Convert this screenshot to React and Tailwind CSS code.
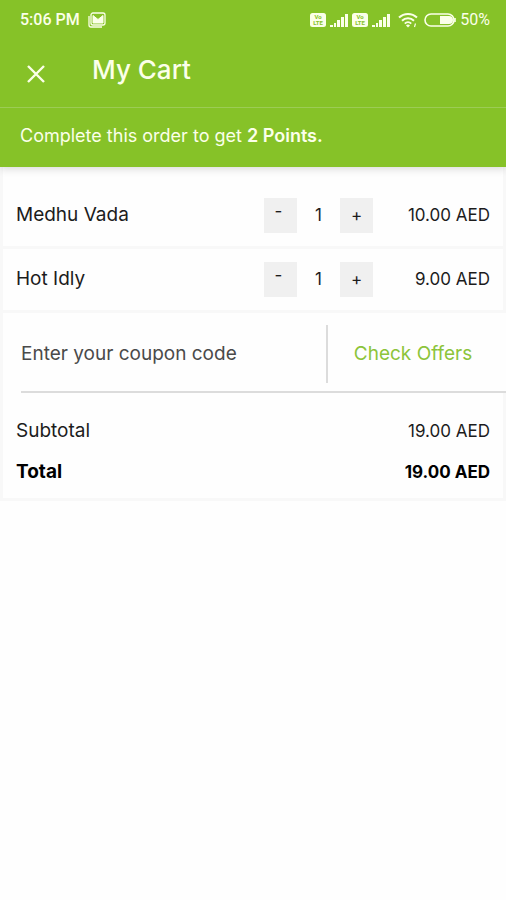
import { useState } from "react";

const initialItems = [
  { id: 1, name: "Medhu Vada", price: 10, qty: 1 },
  { id: 2, name: "Hot Idly", price: 9, qty: 1 },
];

const formatPrice = (value) => `${value.toFixed(2)} AED`;

export default function App() {
  const [items, setItems] = useState(initialItems);
  const [coupon, setCoupon] = useState("");

  const changeQty = (id, step) => {
    setItems(
      items.map((item) =>
        item.id === id ? { ...item, qty: Math.max(0, item.qty + step) } : item
      )
    );
  };

  const total = items.reduce((sum, item) => sum + item.price * item.qty, 0);

  return (
    <div className="min-h-screen bg-[#fefefe] font-['Inter',sans-serif] text-[19px] text-[#1c1c1c]">
      <header className="relative bg-[#86c228] text-[#fbffe9] shadow-[0_2px_8px_rgba(0,0,0,0.15)]">
        <StatusBar />
        <div className="flex h-[68px] items-center gap-11 border-b border-[#9ccc55] px-6 pb-2">
          <button type="button" aria-label="Close">
            <svg className="mt-2 size-6" viewBox="0 0 24 24" fill="none" stroke="currentColor" strokeWidth="2.4">
              <path d="M4 4l16 16M20 4L4 20" />
            </svg>
          </button>
          <h1 className="text-[26px] font-medium">My Cart</h1>
        </div>
        <p className="flex h-[59px] items-center px-5 pb-1 text-lg whitespace-pre">
          Complete this order to get <strong className="font-semibold">2 Points.</strong>
        </p>
      </header>

      <main>
        <ul className="border-x-3 border-[#f8f8f8] pt-[18px]">
          {items.map((item) => (
            <CartItem key={item.id} item={item} onChange={changeQty} />
          ))}
        </ul>

        {/* Coupon */}
        <section className="flex h-20 border-l-3 border-[#f8f8f8] pt-3 pl-[18px]">
          <div className="flex flex-1 border-b-2 border-[#dcdcdc] pb-2">
            <input
              type="text"
              aria-label="Coupon code"
              placeholder="Enter your coupon code"
              value={coupon}
              onChange={(e) => setCoupon(e.target.value)}
              className="min-w-0 flex-1 outline-none placeholder:text-[#4a4a4a]"
            />
            <button
              type="button"
              className="w-[180px] border-l-2 border-[#dcdcdc] pr-2 text-[#8cc43a]"
            >
              Check Offers
            </button>
          </div>
        </section>

        <dl className="border-3 border-t-0 border-[#f8f8f8] px-[13px] pt-6 pb-3 leading-7">
          <div className="flex justify-between pb-[13px]">
            <dt>Subtotal</dt>
            <dd className="text-[17px]">{formatPrice(total)}</dd>
          </div>
          <div className="flex justify-between font-bold text-black">
            <dt>Total</dt>
            <dd className="text-[17px]">{formatPrice(total)}</dd>
          </div>
        </dl>
      </main>
    </div>
  );
}

function CartItem({ item, onChange }) {
  return (
    <li className="flex h-16 items-center border-b-3 border-[#f8f8f8] px-[13px]">
      <span className="flex-1">{item.name}</span>
      <div className="flex h-[35px] items-center text-[17px]">
        <button
          type="button"
          aria-label={`Remove one ${item.name}`}
          onClick={() => onChange(item.id, -1)}
          className="h-full w-[33px] bg-[#f0f0f0] pr-1 pb-2"
        >
          -
        </button>
        <span className="w-[43px] text-center">{item.qty}</span>
        <button
          type="button"
          aria-label={`Add one ${item.name}`}
          onClick={() => onChange(item.id, 1)}
          className="h-full w-[33px] bg-[#f0f0f0]"
        >
          +
        </button>
      </div>
      <span className="w-[117px] text-right text-[17px]">{formatPrice(item.price)}</span>
    </li>
  );
}

function StatusBar() {
  return (
    <div className="flex h-10 items-center justify-between pr-4 pl-5 font-['Roboto',sans-serif] text-base">
      <div className="flex items-center gap-2">
        <span className="font-medium">5:06 PM</span>
        <MailIcon />
      </div>
      <div className="flex items-center gap-1">
        <VolteIcon />
        <SignalIcon />
        <VolteIcon />
        <SignalIcon />
        <WifiIcon />
        <BatteryIcon />
        <span>50%</span>
      </div>
    </div>
  );
}

function MailIcon() {
  return (
    <svg className="h-4 w-[18px]" viewBox="0 0 18 16" fill="none" stroke="currentColor">
      <path d="M1 4v9a2 2 0 0 0 2 2h11" strokeWidth="1.3" />
      <rect x="3" y="1" width="14" height="12" rx="2" strokeWidth="1.3" />
      <path d="M5 11V3.500l5 4 5-4V11z" fill="currentColor" strokeWidth="1" strokeLinejoin="round" />
    </svg>
  );
}

function VolteIcon() {
  return (
    <svg className="h-[14px] w-4" viewBox="0 0 16 14" aria-hidden="true">
      <rect width="16" height="14" rx="2.5" fill="currentColor" />
      <g fill="#86c228" fontSize="6" fontWeight="700" textAnchor="middle">
        <text x="8" y="6">Vo</text>
        <text x="8" y="12">LTE</text>
      </g>
    </svg>
  );
}

function SignalIcon() {
  return (
    <svg className="h-[13px] w-[18px]" viewBox="0 0 18 13" fill="currentColor">
      <rect x="0" y="11" width="3" height="2" />
      <rect x="4" y="9" width="2" height="4" />
      <rect x="7" y="6" width="3" height="7" />
      <rect x="11" y="3" width="3" height="10" />
      <rect x="15" y="0" width="3" height="13" />
    </svg>
  );
}

function WifiIcon() {
  return (
    <svg className="ml-1 h-4 w-5" viewBox="0 0 20 16" fill="none" stroke="currentColor" strokeWidth="2">
      <path d="M1 5.500a13 13 0 0 1 18 0" />
      <path d="M4 8.700a8.600 8.600 0 0 1 12 0" />
      <path d="M6.800 11.600a4.600 4.600 0 0 1 6.400 0" />
      <path d="M10 15.500l-2-2a2.600 2.600 0 0 1 4 0z" fill="currentColor" stroke="none" />
      <path d="M17.500 11.500l-1 3.500" strokeWidth="1.200" />
    </svg>
  );
}

function BatteryIcon() {
  return (
    <svg className="ml-0.5 h-[14px] w-8" viewBox="0 0 32 14">
      <rect x="1" y="1" width="29" height="12" rx="6" fill="none" stroke="currentColor" strokeWidth="1.6" />
      <path d="M16 3h9a4 4 0 0 1 0 8h-9z" fill="currentColor" />
      <path d="M31 5v4" stroke="currentColor" strokeWidth="1.600" />
    </svg>
  );
}
